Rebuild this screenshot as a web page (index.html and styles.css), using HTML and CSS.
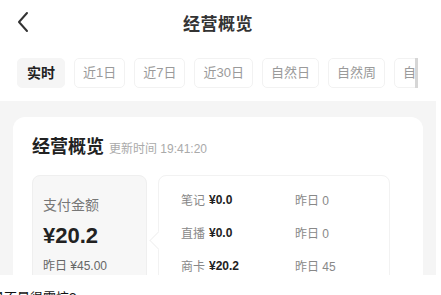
FILE: index.html
```html
<!DOCTYPE html>
<html lang="zh">
<head>
<meta charset="utf-8">
<link rel="stylesheet" href="styles.css">
</head>
<body>
<div class="shot">
  <div class="nav">
    <svg class="back" width="14" height="22" viewBox="0 0 14 22"><polyline points="11,2 3,11 11,20" fill="none" stroke="#333" stroke-width="2" stroke-linecap="round" stroke-linejoin="round"/></svg>
    <div class="nav-title">经营概览</div>
  </div>
  <div class="tabs">
    <div class="tab active">实时</div>
    <div class="tab">近1日</div>
    <div class="tab">近7日</div>
    <div class="tab">近30日</div>
    <div class="tab">自然日</div>
    <div class="tab">自然周</div>
    <div class="tab">自然月</div>
  </div>
  <div class="body">
    <div class="card">
      <div class="card-head">
        <span class="card-title">经营概览</span>
        <span class="card-time">更新时间 19:41:20</span>
      </div>
      <div class="stats">
        <div class="main-box">
          <div class="mb-label">支付金额</div>
          <div class="mb-value">¥20.2</div>
          <div class="mb-prev">昨日 ¥45.00</div>
        </div>
        <div class="detail">
          <div class="row"><span class="r-name">笔记</span><span class="r-val">¥0.0</span><span class="r-prev">昨日 0</span></div>
          <div class="row"><span class="r-name">直播</span><span class="r-val">¥0.0</span><span class="r-prev">昨日 0</span></div>
          <div class="row"><span class="r-name">商卡</span><span class="r-val">¥20.2</span><span class="r-prev">昨日 45</span></div>
        </div>
      </div>
    </div>
  </div>
</div>
<p class="caption">是不是很震惊?</p>
</body>
</html>
```

FILE: styles.css
```css
* { box-sizing: border-box; }
body {
  margin: 0;
  background: #fff;
  font-family: "Liberation Sans", "Noto Sans CJK SC", sans-serif;
  color: #333;
  overflow: hidden;
}
.shot {
  width: 436px;
  height: 275px;
  overflow: hidden;
  background: #fff;
}
.nav {
  position: relative;
  height: 45px;
  display: flex;
  align-items: center;
  justify-content: center;
}
.back {
  position: absolute;
  left: 16px;
  top: 11px;
}
.nav-title {
  font-size: 17px;
  font-weight: 600;
  color: #333;
  letter-spacing: 0.5px;
}
.tabs {
  margin-top: 13px;
  width: 418px;
  height: 30px;
  padding-left: 17px;
  display: flex;
  gap: 9px;
  overflow: hidden;
  border-right: 3px solid #d6d6d6;
}
.tab {
  flex: none;
  height: 30px;
  padding: 0 8px;
  border: 1px solid #f2f2f2;
  border-radius: 5px;
  font-size: 13px;
  line-height: 28px;
  color: #9a9a9a;
}
.tab.active {
  padding: 0 9px;
  font-size: 14px;
  background: #f5f5f5;
  border-color: #f5f5f5;
  color: #222;
  font-weight: 600;
}
.body {
  margin-top: 13px;
  background: #f5f5f5;
  height: 200px;
  padding: 16px 13px 0 13px;
}
.card {
  background: #fff;
  border-radius: 12px;
  height: 200px;
  padding: 15px 19px 0 19px;
}
.card-head {
  display: flex;
  align-items: baseline;
  gap: 5px;
  height: 28px;
}
.card-title {
  font-size: 18px;
  font-weight: 700;
  color: #222;
}
.card-time {
  font-size: 12px;
  color: #aaa;
}
.stats {
  margin-top: 15px;
  display: flex;
  gap: 11px;
}
.main-box {
  width: 115px;
  height: 110px;
  background: #f7f7f7;
  border: 1px solid #efefef;
  border-radius: 8px;
  padding: 19px 0 0 10px;
}
.mb-label {
  font-size: 14px;
  line-height: 20px;
  color: #777;
}
.mb-value {
  margin-top: 8px;
  font-size: 22px;
  line-height: 26px;
  font-weight: 700;
  color: #222;
}
.mb-prev {
  margin-top: 9px;
  font-size: 12px;
  line-height: 16px;
  color: #666;
}
.detail {
  position: relative;
  width: 232px;
  height: 110px;
  border: 1px solid #f2f2f2;
  border-radius: 8px;
  padding: 7px 0 0 22px;
}
.detail::before {
  content: "";
  position: absolute;
  left: -7px;
  top: 58px;
  width: 12px;
  height: 12px;
  background: #fff;
  border-left: 1px solid #f2f2f2;
  border-bottom: 1px solid #f2f2f2;
  transform: rotate(45deg);
}
.row {
  display: flex;
  align-items: center;
  height: 33px;
  font-size: 12px;
}
.r-name {
  color: #888;
  width: 28px;
}
.r-val {
  color: #222;
  font-weight: 700;
  width: 86px;
}
.r-prev {
  color: #888;
}
.caption {
  margin: 12px 0 0 -9px;
  font-size: 13px;
  color: #111;
}
```
